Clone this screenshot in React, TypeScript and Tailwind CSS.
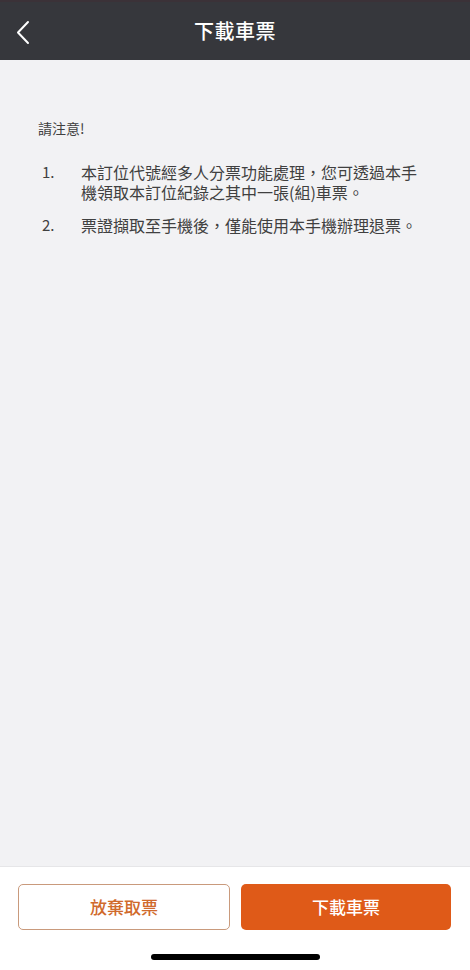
const notes = [
  '本訂位代號經多人分票功能處理，您可透過本手機領取本訂位紀錄之其中一張(組)車票。',
  '票證擷取至手機後，僅能使用本手機辦理退票。',
];

export default function App() {
  return (
    <div
      className="w-[470px] h-[970px] flex flex-col bg-[#f2f2f4]"
      style={{ fontFamily: '"Noto Sans CJK TC", "Liberation Sans", sans-serif' }}
    >
      {/* Top bar */}
      <div className="h-[60px] shrink-0 bg-[#36373c] border-t-2 border-[#3b3238] relative flex items-center justify-center">
        <button className="absolute left-[14px] top-[18px] text-white">
          <svg width="18" height="26" viewBox="0 0 18 26" fill="none">
            <polyline
              points="14,2 4,12.5 14,23"
              stroke="currentColor"
              strokeWidth="2"
              strokeLinecap="round"
              strokeLinejoin="round"
            />
          </svg>
        </button>
        <h1 className="text-[20px] font-medium text-white tracking-[0.5px]">下載車票</h1>
      </div>

      {/* Notice */}
      <div className="flex-1 pt-[58px] pl-[38px] pr-[40px] text-[#404040]">
        <p className="text-[14px] leading-[20px]">請注意!</p>
        <ol className="mt-[24px] space-y-[13px]">
          {notes.map((n, i) => (
            <li key={i} className="flex text-[16px] leading-[20px]">
              <span className="w-[43px] pl-[4px] shrink-0 text-[15px]">{i + 1}.</span>
              <span>{n}</span>
            </li>
          ))}
        </ol>
      </div>

      {/* Actions */}
      <div className="h-[104px] shrink-0 bg-white border-t border-[#e6e6e8] flex flex-col">
        <div className="flex gap-[11px] pl-[18px] pr-[19px] pt-[17px]">
          <button className="flex-1 h-[46px] rounded-[5px] border-[1.5px] border-[#c99a7c] bg-white text-[17px] text-[#d06a2c] font-medium">
            放棄取票
          </button>
          <button className="flex-1 h-[46px] rounded-[5px] bg-[#df5a18] text-[17px] text-white font-medium">
            下載車票
          </button>
        </div>
        <div className="mt-[24px] flex justify-center">
          <div className="w-[169px] h-[6px] rounded-full bg-black" />
        </div>
      </div>
    </div>
  );
}
